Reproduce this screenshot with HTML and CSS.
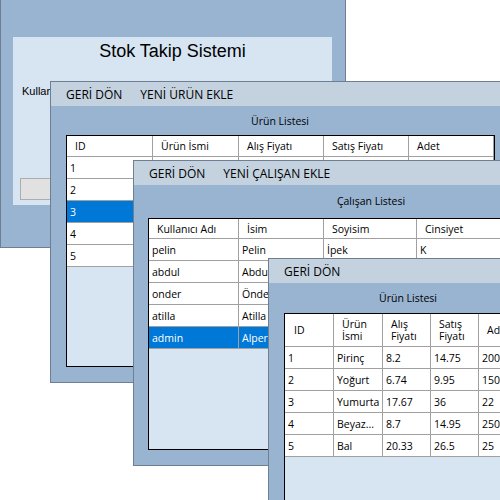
FILE: index.html
```html
<!DOCTYPE html>
<html lang="tr">
<head>
<meta charset="utf-8">
<title>Stok Takip Sistemi</title>
<link rel="stylesheet" href="styles.css">
</head>
<body>
<div class="desk">

  <div class="win w1">
    <div class="panel">
      <div class="title">Stok Takip Sistemi</div>
      <div class="frow"><span class="lbl">Kullanıcı Adı:</span><span class="tb"></span></div>
      <div class="btn"></div>
    </div>
  </div>

  <div class="win w2">
    <div class="menu"><span class="mi">GERİ DÖN</span><span class="mi">YENİ ÜRÜN EKLE</span></div>
    <div class="cap">Ürün Listesi</div>
    <div class="grid">
      <div class="row head"><div class="c">ID</div><div class="c">Ürün İsmi</div><div class="c">Alış Fiyatı</div><div class="c">Satış Fiyatı</div><div class="c">Adet</div></div>
      <div class="row"><div class="c">1</div><div class="c">Pirinç</div><div class="c">8.2</div><div class="c">14.75</div><div class="c">200</div></div>
      <div class="row"><div class="c">2</div><div class="c">Yoğurt</div><div class="c">6.74</div><div class="c">9.95</div><div class="c">150</div></div>
      <div class="row sel"><div class="c">3</div><div class="c">Yumurta</div><div class="c">17.67</div><div class="c">36</div><div class="c">22</div></div>
      <div class="row"><div class="c">4</div><div class="c">Beyaz Peynir</div><div class="c">8.7</div><div class="c">14.95</div><div class="c">250</div></div>
      <div class="row"><div class="c">5</div><div class="c">Bal</div><div class="c">20.33</div><div class="c">26.5</div><div class="c">25</div></div>
    </div>
  </div>

  <div class="win w3">
    <div class="menu"><span class="mi">GERİ DÖN</span><span class="mi">YENİ ÇALIŞAN EKLE</span></div>
    <div class="cap">Çalışan Listesi</div>
    <div class="grid">
      <div class="row head"><div class="c">Kullanıcı Adı</div><div class="c">İsim</div><div class="c">Soyisim</div><div class="c">Cinsiyet</div></div>
      <div class="row"><div class="c">pelin</div><div class="c">Pelin</div><div class="c">İpek</div><div class="c">K</div></div>
      <div class="row"><div class="c">abdul</div><div class="c">Abdullah</div><div class="c">Yılmaz</div><div class="c">E</div></div>
      <div class="row"><div class="c">onder</div><div class="c">Önder</div><div class="c">Kaya</div><div class="c">E</div></div>
      <div class="row"><div class="c">atilla</div><div class="c">Atilla</div><div class="c">Demir</div><div class="c">E</div></div>
      <div class="row sel"><div class="c">admin</div><div class="c">Alper</div><div class="c">Şahin</div><div class="c">E</div></div>
    </div>
  </div>

  <div class="win w4">
    <div class="menu"><span class="mi">GERİ DÖN</span></div>
    <div class="cap">Ürün Listesi</div>
    <div class="grid">
      <div class="row head"><div class="c">ID</div><div class="c">Ürün<br>İsmi</div><div class="c">Alış<br>Fiyatı</div><div class="c">Satış<br>Fiyatı</div><div class="c">Adet</div></div>
      <div class="row"><div class="c">1</div><div class="c">Pirinç</div><div class="c">8.2</div><div class="c">14.75</div><div class="c">200</div></div>
      <div class="row"><div class="c">2</div><div class="c">Yoğurt</div><div class="c">6.74</div><div class="c">9.95</div><div class="c">150</div></div>
      <div class="row"><div class="c">3</div><div class="c">Yumurta</div><div class="c">17.67</div><div class="c">36</div><div class="c">22</div></div>
      <div class="row"><div class="c">4</div><div class="c">Beyaz...</div><div class="c">8.7</div><div class="c">14.95</div><div class="c">250</div></div>
      <div class="row"><div class="c">5</div><div class="c">Bal</div><div class="c">20.33</div><div class="c">26.5</div><div class="c">25</div></div>
    </div>
  </div>

</div>
</body>
</html>
```

FILE: styles.css
```css
* { box-sizing: border-box; }
html, body { margin: 0; padding: 0; background: #ffffff; }
.desk {
  position: relative;
  width: 500px;
  height: 500px;
  overflow: hidden;
  background: #ffffff;
  font-family: "Open Sans", "Noto Sans", sans-serif;
  color: #000;
}
.win {
  position: absolute;
  background: #99b4d1;
  border: 1px solid #6d7f91;
  overflow: hidden;
  display: flex;
  flex-direction: column;
  align-items: flex-start;
}

/* login window */
.w1 { left: 0; top: -1px; width: 346px; height: 249px; }
.panel {
  margin: 37px 0 0 12px;
  width: 319px;
  height: 168px;
  background: #d7e4f2;
  display: flex;
  flex-direction: column;
  align-items: flex-start;
  padding-top: 3px;
}
.title {
  align-self: stretch;
  text-align: center;
  font-family: "Liberation Sans", Arial, sans-serif;
  font-size: 18px;
  line-height: 22px;
}
.frow {
  margin-top: 19px;
  display: flex;
  align-items: center;
  height: 20px;
}
.lbl {
  font-family: "Liberation Sans", Arial, sans-serif;
  font-size: 11px;
  width: 79px;
  padding-left: 9px;
  white-space: nowrap;
  overflow: hidden;
}
.tb {
  width: 234px;
  height: 20px;
  background: #fff;
  border: 1px solid #3d6f91;
}
.btn {
  margin: 77px 0 0 7px;
  width: 75px;
  height: 22px;
  background: #e1e1e1;
  border: 1px solid #adadad;
}

/* menus */
.menu {
  align-self: stretch;
  height: 24px;
  background: #c4d2df;
  display: flex;
  align-items: center;
  padding-left: 6px;
  font-size: 12px;
  flex-shrink: 0;
}
.mi { padding: 0 9px; white-space: nowrap; }

.cap {
  font-size: 10.5px;
  line-height: 14px;
  text-align: center;
  white-space: nowrap;
}

.grid {
  border: 1px solid #000;
  background: #d7e4f2;
  font-size: 10.5px;
  flex-shrink: 0;
  overflow: hidden;
}
.row { display: grid; height: 22px; }
.c {
  background: #fff;
  border-right: 1px solid #a0a0a0;
  border-bottom: 1px solid #a0a0a0;
  padding-left: 3px;
  white-space: nowrap;
  overflow: hidden;
  display: flex;
  align-items: center;
}
.head .c { padding-left: 8px; }
.sel .c { background: #0078d7; color: #fff; }

/* window 2 */
.w2 { left: 50px; top: 81px; width: 470px; height: 302px; }
.w2 .cap { margin: 8px 0 0 15px; width: 428px; }
.w2 .grid { margin: 7px 0 0 15px; width: 429px; height: 232px; }
.w2 .row { grid-template-columns: 86px 86px 85px 85px 85px; }
.w2 .head { height: 21px; }

/* window 3 */
.w3 { left: 133px; top: 160px; width: 400px; height: 306px; }
.w3 .cap { margin: 9px 0 0 14px; width: 446px; }
.w3 .grid { margin: 10px 0 0 14px; width: 380px; height: 232px; }
.w3 .row { grid-template-columns: 90px 85px 93px 110px; }
.w3 .head { height: 20px; }

/* window 4 */
.w4 { left: 268px; top: 258px; width: 260px; height: 260px; }
.w4 .cap { margin: 8px 0 0 15px; width: 248px; }
.w4 .grid { margin: 8px 0 0 15px; width: 260px; height: 260px; }
.w4 .row { grid-template-columns: 49px 49px 48px 48px 66px; }
.w4 .head { height: 33px; }
.w4 .head .c { line-height: 12px; }
.w4 .head .c:first-child { padding-left: 9px; }
```
